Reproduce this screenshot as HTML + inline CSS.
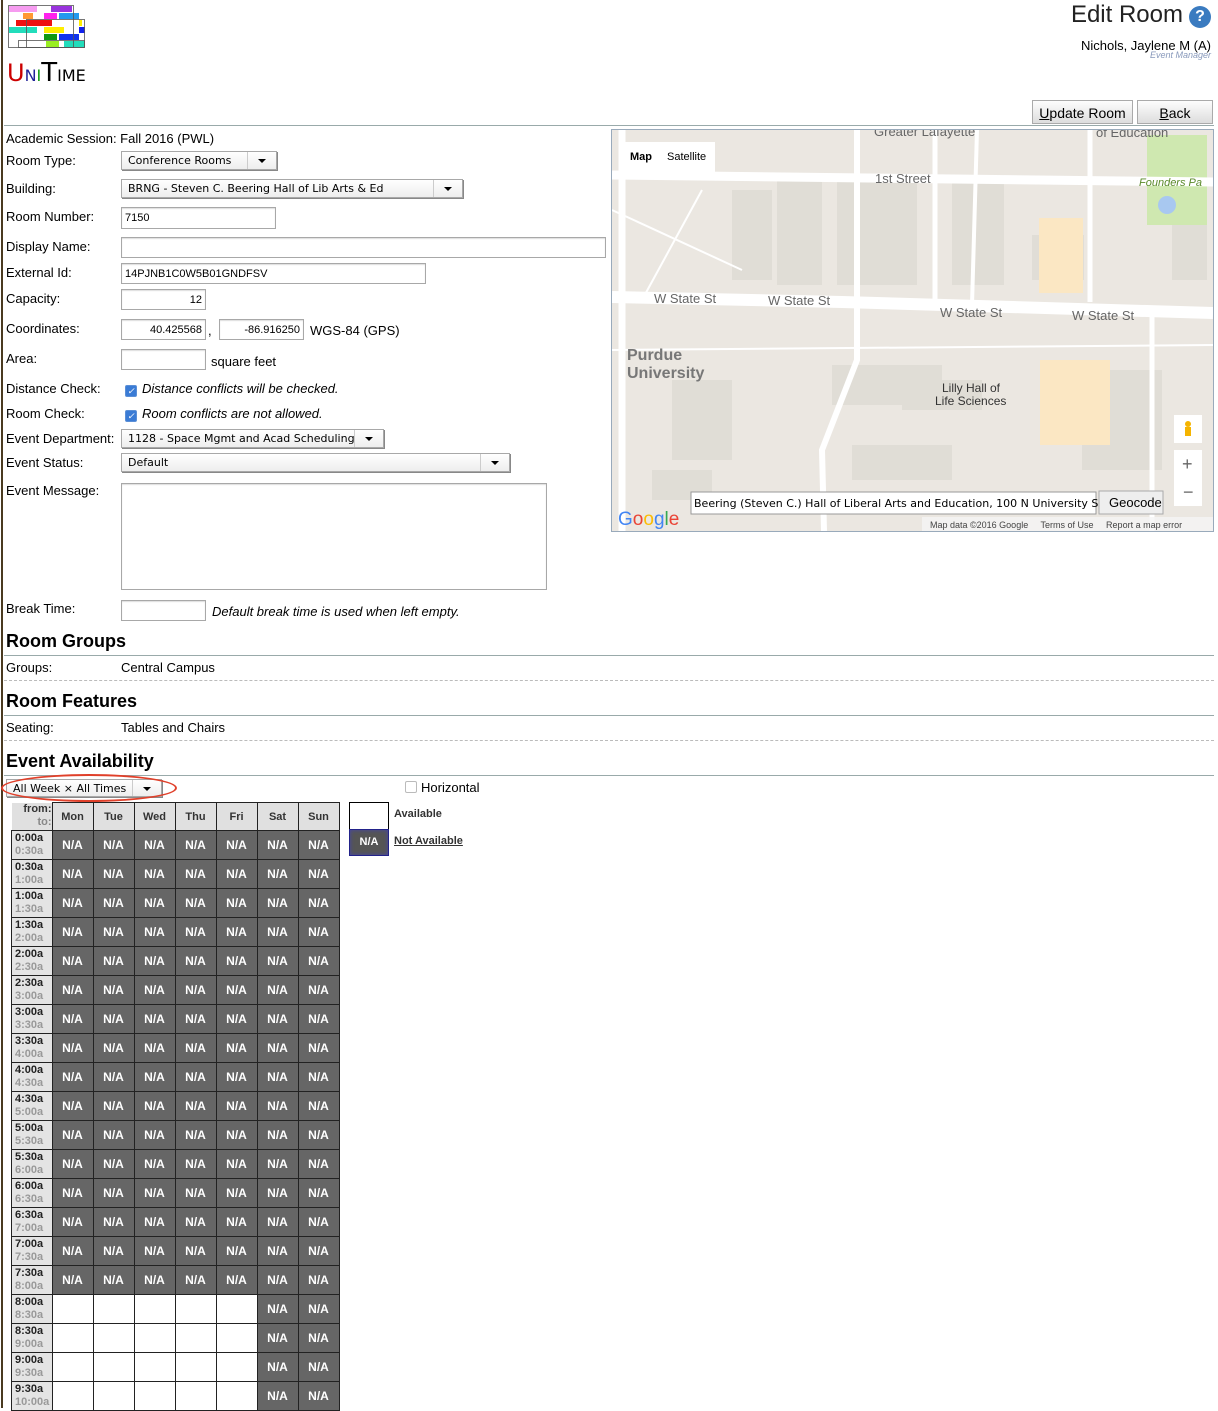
<!DOCTYPE html>
<html><head><meta charset="utf-8"><style>
body{margin:0;width:1218px;height:1408px;overflow:hidden;background:#fff;font-family:"Liberation Sans",Arial,sans-serif;font-size:13px;color:#000;position:relative}
.a{position:absolute;white-space:nowrap}
.lbl{position:absolute;left:6px;white-space:nowrap}
.in{position:absolute;border:1px solid #a8a8a8;box-shadow:inset 0 1px 1px #ddd;background:#fff;font-size:11px;padding:0 3px;box-sizing:border-box;line-height:20px;white-space:nowrap;overflow:hidden}
.sel{position:absolute;border:1px solid #a8a8a8;background:linear-gradient(#fff,#eee);font-size:11px;font-family:"DejaVu Sans",sans-serif;padding-left:6px;box-sizing:border-box;line-height:18px;box-shadow:1px 1px 0 #888;white-space:nowrap}
.sel:after{content:"";position:absolute;right:10px;top:7px;border:4px solid transparent;border-top:4px solid #000;border-bottom:0}
.sel i{position:absolute;right:0;top:0;bottom:0;width:28px;border-left:1px solid #ccc}
.h{position:absolute;left:6px;font-size:18px;font-weight:bold}
.ln{position:absolute;left:4px;right:4px;height:1px;background:#9aa}
.dl{position:absolute;left:4px;right:4px;border-top:1px dashed #bbb}
.cb{display:inline-block;width:10px;height:10px;border:1px solid #5b8fd6;background:#3a7bd5;border-radius:2px;vertical-align:-1px;margin-right:5px;color:#fff;font-size:9px;line-height:10px;text-align:center}
.btn{position:absolute;top:100px;height:24px;border:1px solid #aaa;background:linear-gradient(#fdfdfd,#ddd);font-size:14px;text-align:center;line-height:24px;box-sizing:border-box}
table.g{position:absolute;left:11px;top:802px;border-collapse:collapse}
table.g td{border:1px solid #222;padding:0;height:28px;width:40px;text-align:center;font-size:12px;font-weight:bold}
table.g tr.hd td{background:#e0e0e0;color:#333;font-size:11px;height:27px}
table.g td.t{background:#e4e4e4;text-align:left;padding-left:3px;font-size:11px;line-height:13px;width:36px;color:#222}
table.g td.t span{color:#999;display:block}
table.g td.n{background:#666;color:#fff}
table.g td.w{background:#fff}
table.g td.c{border:none;background:#fff;text-align:right;font-size:11px;color:#333;line-height:13px;vertical-align:top}
</style></head><body>
<div class="a" style="left:1px;top:0;width:2px;height:1408px;background:#4a3a20"></div>
<svg class="a" style="left:8px;top:5px" width="78" height="48" viewBox="0 0 78 48">
<rect x="0" y="0" width="66" height="46" fill="#fff"/>
<rect x="1" y="1" width="28" height="6" fill="#f69cf0"/><rect x="43" y="1" width="21" height="6" fill="#9933dd"/>
<rect x="15" y="8" width="10" height="6" fill="#ff9933"/><rect x="36" y="8" width="13" height="6" fill="#ff22ee"/><rect x="51" y="8" width="20" height="6" fill="#2299ee"/>
<rect x="8" y="15" width="36" height="6" fill="#ee1111"/><rect x="71" y="15" width="3" height="6" fill="#ffee00"/>
<rect x="1" y="22" width="28" height="6" fill="#22ddbb"/><rect x="36" y="22" width="20" height="6" fill="#ffee00"/><rect x="71" y="22" width="6" height="6" fill="#1122ee"/>
<rect x="36" y="29" width="13" height="6" fill="#119911"/><rect x="51" y="29" width="20" height="6" fill="#1133ee"/>
<rect x="38" y="36" width="13" height="6" fill="#99ee22"/><rect x="56" y="36" width="21" height="6" fill="#22ddbb"/>
<g stroke="#555" stroke-width="0.8" fill="none"><rect x="0.5" y="0.5" width="65" height="42"/><rect x="18.5" y="14.5" width="58" height="28"/><rect x="10.5" y="35.5" width="66" height="7"/></g>
</svg>
<div class="a" style="left:7px;top:58px;font-size:24px;font-family:'DejaVu Sans',sans-serif"><span style="color:#c00">U</span><span style="color:#229;font-size:16px">N</span><span style="color:#191;font-size:16px">I</span><span style="font-size:26px">T</span><span style="font-size:16px">IME</span></div>
<div class="a" style="right:35px;top:1px;font-size:24px;color:#222">Edit Room</div>
<div class="a" style="left:1189px;top:6px;width:22px;height:22px;border-radius:50%;background:#3a7bc0;color:#fff;font-weight:bold;font-size:16px;text-align:center;line-height:22px">?</div>
<div class="a" style="right:7px;top:38px;font-size:13px">Nichols, Jaylene M (A)</div>
<div class="a" style="right:7px;top:50px;font-size:9px;color:#8899bb;font-style:italic">Event Manager</div>
<div class="btn" style="left:1032px;width:101px"><u>U</u>pdate Room</div>
<div class="btn" style="left:1137px;width:76px"><u>B</u>ack</div>
<div class="a" style="left:4px;right:4px;top:125px;height:1px;background:#9aa"></div>
<div class="lbl" style="top:131px">Academic Session: Fall 2016 (PWL)</div>
<div class="lbl" style="top:153px">Room Type:</div><div class="sel" style="left:121px;top:151px;width:156px;height:19px">Conference Rooms<i></i></div>
<div class="lbl" style="top:181px">Building:</div><div class="sel" style="left:121px;top:179px;width:342px;height:19px">BRNG - Steven C. Beering Hall of Lib Arts &amp; Ed<i></i></div>
<div class="lbl" style="top:209px">Room Number:</div><div class="in" style="left:121px;top:207px;width:155px;height:22px">7150</div>
<div class="lbl" style="top:239px">Display Name:</div><div class="in" style="left:121px;top:237px;width:485px;height:21px"></div>
<div class="lbl" style="top:265px">External Id:</div><div class="in" style="left:121px;top:263px;width:305px;height:21px">14PJNB1C0W5B01GNDFSV</div>
<div class="lbl" style="top:291px">Capacity:</div><div class="in" style="left:121px;top:289px;width:85px;height:21px;text-align:right">12</div>
<div class="lbl" style="top:321px">Coordinates:</div><div class="in" style="left:121px;top:319px;width:85px;height:21px;text-align:right">40.425568</div>
<div class="a" style="left:208px;top:323px">,</div><div class="in" style="left:219px;top:319px;width:85px;height:21px;text-align:right">-86.916250</div>
<div class="a" style="left:310px;top:323px">WGS-84 (GPS)</div>
<div class="lbl" style="top:351px">Area:</div><div class="in" style="left:121px;top:349px;width:85px;height:21px"></div><div class="a" style="left:211px;top:354px">square feet</div>
<div class="lbl" style="top:381px">Distance Check:</div><div class="a" style="left:125px;top:381px;font-style:italic"><span class="cb">✓</span>Distance conflicts will be checked.</div>
<div class="lbl" style="top:406px">Room Check:</div><div class="a" style="left:125px;top:406px;font-style:italic"><span class="cb">✓</span>Room conflicts are not allowed.</div>
<div class="lbl" style="top:431px">Event Department:</div><div class="sel" style="left:121px;top:429px;width:263px;height:19px">1128 - Space Mgmt and Acad Scheduling<i></i></div>
<div class="lbl" style="top:455px">Event Status:</div><div class="sel" style="left:121px;top:453px;width:389px;height:19px">Default<i></i></div>
<div class="lbl" style="top:483px">Event Message:</div><div class="in" style="left:121px;top:483px;width:426px;height:107px"></div>
<div class="lbl" style="top:601px">Break Time:</div><div class="in" style="left:121px;top:600px;width:85px;height:21px"></div><div class="a" style="left:212px;top:604px;font-style:italic">Default break time is used when left empty.</div>
<svg class="a" style="left:611px;top:129px;border:1px solid #9ab" width="601" height="401" viewBox="0 0 601 401">
<rect width="601" height="401" fill="#ebe7e1"/>
<g fill="#e0ddd6"><rect x="165" y="45" width="45" height="110"/><rect x="225" y="45" width="80" height="110"/><rect x="340" y="45" width="52" height="110"/><rect x="420" y="105" width="52" height="45"/><rect x="60" y="250" width="60" height="80"/><rect x="220" y="235" width="110" height="40"/><rect x="240" y="315" width="100" height="35"/><rect x="470" y="240" width="80" height="100"/><rect x="290" y="250" width="80" height="30"/><rect x="40" y="340" width="60" height="30"/><rect x="560" y="60" width="35" height="90"/><rect x="120" y="60" width="40" height="90"/></g>
<rect x="427" y="88" width="44" height="75" fill="#fbe7c3"/><rect x="428" y="230" width="70" height="85" fill="#fbe7c3"/>
<rect x="535" y="5" width="60" height="90" fill="#cfe8b0"/><circle cx="555" cy="75" r="9" fill="#a8c8f0"/>
<g stroke="#fff" fill="none"><path d="M0 45 L601 52" stroke-width="9"/><path d="M0 167 L230 172 L601 183" stroke-width="12"/><path d="M245 0 L245 170 L245 230 L210 320 L212 401" stroke-width="6"/><path d="M323 0 L323 170" stroke-width="5"/><path d="M365 0 L360 175" stroke-width="4"/><path d="M478 0 L478 172" stroke-width="5"/><path d="M10 0 L10 401" stroke-width="7"/><path d="M540 185 L540 401" stroke-width="5"/><path d="M0 220 L601 215" stroke-width="2"/><path d="M0 80 L130 140 M90 60 L30 170" stroke-width="2"/></g>
<g font-family="Liberation Sans" font-size="13" fill="#666"><text x="42" y="173">W State St</text><text x="156" y="175">W State St</text><text x="328" y="187">W State St</text><text x="460" y="190">W State St</text><text x="263" y="53">1st Street</text><text x="262" y="6">Greater Lafayette</text><text x="484" y="7">of Education</text><text x="15" y="230" font-size="16" font-weight="bold" fill="#777">Purdue</text><text x="15" y="248" font-size="16" font-weight="bold" fill="#777">University</text><text x="330" y="262" font-size="12" fill="#333">Lilly Hall of</text><text x="323" y="275" font-size="12" fill="#333">Life Sciences</text><text x="527" y="56" font-size="11" fill="#5a8a2a" font-style="italic">Founders Pa</text></g>
<rect x="8" y="12" width="95" height="30" fill="#fff"/><text x="18" y="30" font-size="11" font-family="Liberation Sans" font-weight="bold">Map</text><text x="55" y="30" font-size="11" font-family="Liberation Sans">Satellite</text>
<rect x="562" y="285" width="28" height="28" fill="#fff"/><rect x="562" y="320" width="28" height="56" fill="#fff"/><text x="570" y="340" font-size="18" fill="#666">+</text><text x="571" y="368" font-size="18" fill="#666">−</text>
<circle cx="576" cy="294" r="3" fill="#f5b400"/><rect x="573" y="297" width="6" height="9" fill="#f5b400"/>
<rect x="79" y="362" width="405" height="22" fill="#fff" stroke="#999"/><text x="82" y="377" font-size="11" font-family="DejaVu Sans">Beering (Steven C.) Hall of Liberal Arts and Education, 100 N University St</text>
<rect x="487" y="361" width="64" height="23" fill="#eee" stroke="#aaa"/><text x="497" y="377" font-size="13" font-family="Liberation Sans">Geocode</text>
<text x="6" y="395" font-size="19" font-family="Liberation Sans"><tspan fill="#4285f4">G</tspan><tspan fill="#ea4335">o</tspan><tspan fill="#fbbc05">o</tspan><tspan fill="#4285f4">g</tspan><tspan fill="#34a853">l</tspan><tspan fill="#ea4335">e</tspan></text>
<rect x="310" y="387" width="291" height="14" fill="#f5f5f5" opacity=".8"/><text x="318" y="398" font-size="9" font-family="Liberation Sans" fill="#444" xml:space="preserve">Map data ©2016 Google     Terms of Use     Report a map error</text>
</svg>
<div class="h" style="top:631px">Room Groups</div><div class="ln" style="top:655px"></div>
<div class="lbl" style="top:660px">Groups:</div><div class="a" style="left:121px;top:660px">Central Campus</div><div class="dl" style="top:680px"></div>
<div class="h" style="top:691px">Room Features</div><div class="ln" style="top:715px"></div>
<div class="lbl" style="top:720px">Seating:</div><div class="a" style="left:121px;top:720px">Tables and Chairs</div><div class="dl" style="top:740px"></div>
<div class="h" style="top:751px">Event Availability</div><div class="ln" style="top:775px"></div>
<div class="sel" style="left:6px;top:779px;width:156px;height:18px;line-height:17px">All Week × All Times<i></i></div>
<div class="a" style="left:1px;top:774px;width:172px;height:24px;border:2px solid #e0402a;border-radius:50%"></div>
<div class="a" style="left:405px;top:780px"><span style="display:inline-block;width:10px;height:10px;border:1px solid #bbb;border-radius:2px;vertical-align:-1px;margin-right:4px"></span>Horizontal</div>
<div class="a" style="left:349px;top:802px;width:38px;height:26px;border:1px solid #000;background:#fff"></div>
<div class="a" style="left:394px;top:808px;font-size:11px;font-weight:bold;color:#333">Available</div>
<div class="a" style="left:349px;top:829px;width:38px;height:25px;border:1px solid #22228a;background:#555;color:#fff;font-size:11px;font-weight:bold;text-align:center;line-height:25px;box-shadow:inset 0 0 4px #44a">N/A</div>
<div class="a" style="left:394px;top:835px;font-size:11px;font-weight:bold;color:#333;text-decoration:underline">Not Available</div>
<table class="g">
<tr class="hd"><td class="c">from:<br><span style="color:#888">to:</span></td><td>Mon</td><td>Tue</td><td>Wed</td><td>Thu</td><td>Fri</td><td>Sat</td><td>Sun</td></tr>
<tr><td class="t">0:00a<span>0:30a</span></td><td class="n">N/A</td><td class="n">N/A</td><td class="n">N/A</td><td class="n">N/A</td><td class="n">N/A</td><td class="n">N/A</td><td class="n">N/A</td></tr>
<tr><td class="t">0:30a<span>1:00a</span></td><td class="n">N/A</td><td class="n">N/A</td><td class="n">N/A</td><td class="n">N/A</td><td class="n">N/A</td><td class="n">N/A</td><td class="n">N/A</td></tr>
<tr><td class="t">1:00a<span>1:30a</span></td><td class="n">N/A</td><td class="n">N/A</td><td class="n">N/A</td><td class="n">N/A</td><td class="n">N/A</td><td class="n">N/A</td><td class="n">N/A</td></tr>
<tr><td class="t">1:30a<span>2:00a</span></td><td class="n">N/A</td><td class="n">N/A</td><td class="n">N/A</td><td class="n">N/A</td><td class="n">N/A</td><td class="n">N/A</td><td class="n">N/A</td></tr>
<tr><td class="t">2:00a<span>2:30a</span></td><td class="n">N/A</td><td class="n">N/A</td><td class="n">N/A</td><td class="n">N/A</td><td class="n">N/A</td><td class="n">N/A</td><td class="n">N/A</td></tr>
<tr><td class="t">2:30a<span>3:00a</span></td><td class="n">N/A</td><td class="n">N/A</td><td class="n">N/A</td><td class="n">N/A</td><td class="n">N/A</td><td class="n">N/A</td><td class="n">N/A</td></tr>
<tr><td class="t">3:00a<span>3:30a</span></td><td class="n">N/A</td><td class="n">N/A</td><td class="n">N/A</td><td class="n">N/A</td><td class="n">N/A</td><td class="n">N/A</td><td class="n">N/A</td></tr>
<tr><td class="t">3:30a<span>4:00a</span></td><td class="n">N/A</td><td class="n">N/A</td><td class="n">N/A</td><td class="n">N/A</td><td class="n">N/A</td><td class="n">N/A</td><td class="n">N/A</td></tr>
<tr><td class="t">4:00a<span>4:30a</span></td><td class="n">N/A</td><td class="n">N/A</td><td class="n">N/A</td><td class="n">N/A</td><td class="n">N/A</td><td class="n">N/A</td><td class="n">N/A</td></tr>
<tr><td class="t">4:30a<span>5:00a</span></td><td class="n">N/A</td><td class="n">N/A</td><td class="n">N/A</td><td class="n">N/A</td><td class="n">N/A</td><td class="n">N/A</td><td class="n">N/A</td></tr>
<tr><td class="t">5:00a<span>5:30a</span></td><td class="n">N/A</td><td class="n">N/A</td><td class="n">N/A</td><td class="n">N/A</td><td class="n">N/A</td><td class="n">N/A</td><td class="n">N/A</td></tr>
<tr><td class="t">5:30a<span>6:00a</span></td><td class="n">N/A</td><td class="n">N/A</td><td class="n">N/A</td><td class="n">N/A</td><td class="n">N/A</td><td class="n">N/A</td><td class="n">N/A</td></tr>
<tr><td class="t">6:00a<span>6:30a</span></td><td class="n">N/A</td><td class="n">N/A</td><td class="n">N/A</td><td class="n">N/A</td><td class="n">N/A</td><td class="n">N/A</td><td class="n">N/A</td></tr>
<tr><td class="t">6:30a<span>7:00a</span></td><td class="n">N/A</td><td class="n">N/A</td><td class="n">N/A</td><td class="n">N/A</td><td class="n">N/A</td><td class="n">N/A</td><td class="n">N/A</td></tr>
<tr><td class="t">7:00a<span>7:30a</span></td><td class="n">N/A</td><td class="n">N/A</td><td class="n">N/A</td><td class="n">N/A</td><td class="n">N/A</td><td class="n">N/A</td><td class="n">N/A</td></tr>
<tr><td class="t">7:30a<span>8:00a</span></td><td class="n">N/A</td><td class="n">N/A</td><td class="n">N/A</td><td class="n">N/A</td><td class="n">N/A</td><td class="n">N/A</td><td class="n">N/A</td></tr>
<tr><td class="t">8:00a<span>8:30a</span></td><td class="w"></td><td class="w"></td><td class="w"></td><td class="w"></td><td class="w"></td><td class="n">N/A</td><td class="n">N/A</td></tr>
<tr><td class="t">8:30a<span>9:00a</span></td><td class="w"></td><td class="w"></td><td class="w"></td><td class="w"></td><td class="w"></td><td class="n">N/A</td><td class="n">N/A</td></tr>
<tr><td class="t">9:00a<span>9:30a</span></td><td class="w"></td><td class="w"></td><td class="w"></td><td class="w"></td><td class="w"></td><td class="n">N/A</td><td class="n">N/A</td></tr>
<tr><td class="t">9:30a<span>10:00a</span></td><td class="w"></td><td class="w"></td><td class="w"></td><td class="w"></td><td class="w"></td><td class="n">N/A</td><td class="n">N/A</td></tr>
</table>
</body></html>
